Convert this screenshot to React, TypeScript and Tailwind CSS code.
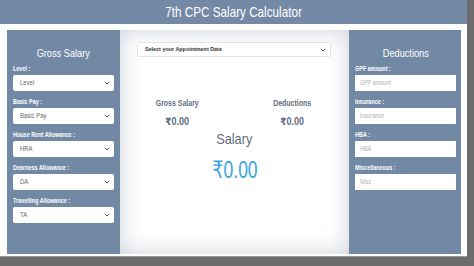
import React from 'react';

const font = { fontFamily: '"Liberation Sans", Arial, "DejaVu Sans", sans-serif' };

function Chevron() {
  return (
    <svg width="6" height="4" viewBox="0 0 6 4" className="shrink-0">
      <path d="M0.8 0.8 L3 3 L5.2 0.8" fill="none" stroke="#555" strokeWidth="1" />
    </svg>
  );
}

function FakeSelect({ text }: { text: string }) {
  return (
    <div className="mt-[2px] h-[16px] bg-white rounded-[2px] flex items-center justify-between pl-[7px] pr-[4px]">
      <span className="text-[7px] text-[#666] inline-block scale-x-[0.85] origin-left">{text}</span>
      <Chevron />
    </div>
  );
}

function Field({ label, text, select }: { label: string; text: string; select?: boolean }) {
  return (
    <div className="mb-[6px]">
      <div className="h-[9px] leading-[9px] text-[6.5px] font-bold text-white">
        <span className="inline-block scale-x-[0.84] origin-left whitespace-nowrap">{label}</span>
      </div>
      {select ? (
        <FakeSelect text={text} />
      ) : (
        <div className="mt-[2px] h-[16px] bg-white flex items-center pl-[5px]">
          <span className="text-[6.5px] text-[#b0b0b0] inline-block scale-x-[0.84] origin-left">{text}</span>
        </div>
      )}
    </div>
  );
}

export default function App() {
  const gross = [
    ['Level :', 'Level'],
    ['Basic Pay :', 'Basic Pay'],
    ['House Rent Allowance :', 'HRA'],
    ['Dearness Allowance :', 'DA'],
    ['Travelling Allowance :', 'TA'],
  ];
  const deductions = [
    ['GPF amount :', 'GPF amount'],
    ['Insurance :', 'Insurance'],
    ['HBA :', 'HBA'],
    ['Miscellaneous :', 'Misc'],
  ];

  return (
    <div className="w-[474px] h-[266px] bg-[#6c6c6c] overflow-hidden" style={font}>
      <div className="w-[467px] h-[257px] bg-white flex flex-col border-b border-[#9a9a9a]">
        <div className="h-[24px] shrink-0 bg-[#7389a6] text-white text-[15px] flex items-center justify-center">
          <span className="inline-block scale-x-[0.78] whitespace-nowrap">7th CPC Salary Calculator</span>
        </div>
        <div className="flex flex-1 pl-[7px] pr-[6px] pt-[6px] pb-[2px]">
          <div className="w-[113px] bg-[#7189a5] px-[6px] pt-[16px]">
            <div className="h-[14px] leading-[14px] text-center text-white text-[11.5px] mb-[4px]">
              <span className="inline-block scale-x-[0.8] whitespace-nowrap">Gross Salary</span>
            </div>
            {gross.map(([l, t]) => (
              <Field key={l} label={l} text={t} select />
            ))}
          </div>

          <div className="w-[229px] bg-white shadow-[inset_0_0_22px_rgba(120,135,155,0.38)] pt-[12px]">
            <div className="ml-[17px] w-[194px] h-[15px] bg-white rounded-[2px] border border-[#e4e4e4] flex items-center justify-between pl-[7px] pr-[4px]">
              <span className="text-[6px] font-bold text-[#333] inline-block scale-x-[0.9] origin-left whitespace-nowrap">Select your Appointment Date</span>
              <Chevron />
            </div>
            <div className="grid grid-cols-2 mt-[41px] text-[#5f6d80]">
              <div className="flex flex-col items-center">
                <div className="text-[8.5px] font-bold leading-[10px] scale-x-[0.82] whitespace-nowrap">Gross Salary</div>
                <div className="text-[10px] font-bold mt-[9px] leading-[10px] scale-x-[0.9]">₹0.00</div>
              </div>
              <div className="flex flex-col items-center">
                <div className="text-[8.5px] font-bold leading-[10px] scale-x-[0.82] whitespace-nowrap">Deductions</div>
                <div className="text-[10px] font-bold mt-[9px] leading-[10px] scale-x-[0.9]">₹0.00</div>
              </div>
            </div>
            <div className="text-center text-[#5f6b7a] text-[15px] leading-[16px] mt-[4px]">
              <span className="inline-block scale-x-[0.85]">Salary</span>
            </div>
            <div className="text-center text-[#3aa6d8] text-[24px] leading-[26px] mt-[10px]">
              <span className="inline-block scale-x-[0.73]">₹0.00</span>
            </div>
          </div>

          <div className="w-[112px] bg-[#7189a5] pl-[6px] pr-[5px] pt-[16px]">
            <div className="h-[14px] leading-[14px] text-center text-white text-[11.5px] mb-[4px]">
              <span className="inline-block scale-x-[0.8] whitespace-nowrap">Deductions</span>
            </div>
            {deductions.map(([l, t]) => (
              <Field key={l} label={l} text={t} />
            ))}
          </div>
        </div>
      </div>
    </div>
  );
}
